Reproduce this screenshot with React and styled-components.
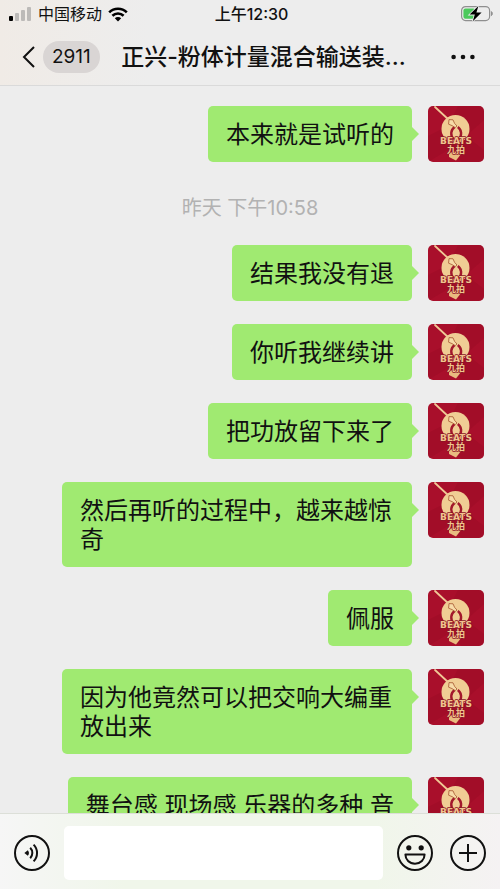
import styled, { createGlobalStyle } from "styled-components";
import { useState } from "react";

const chat = [
    { id: 1, text: "本来就是试听的" },
    { id: 2, time: "昨天 下午10:58" },
    { id: 3, text: "结果我没有退" },
    { id: 4, text: "你听我继续讲" },
    { id: 5, text: "把功放留下来了" },
    { id: 6, text: "然后再听的过程中，越来越惊奇" },
    { id: 7, text: "佩服" },
    { id: 8, text: "因为他竟然可以把交响大编重放出来" },
    { id: 9, text: "舞台感 现场感 乐器的多种 音" },
];

function SignalIcon() {
    return (
        <svg width="23" height="16" viewBox="0 0 23 16" aria-hidden="true">
            <rect x="0" y="10" width="4" height="5" rx="1" fill="#000" />
            <rect x="6" y="7" width="4" height="8" rx="1" fill="#bcbab8" />
            <rect x="12" y="4" width="4" height="11" rx="1" fill="#bcbab8" />
            <rect x="18" y="1" width="4" height="14" rx="1" fill="#bcbab8" />
        </svg>
    );
}

function WifiIcon() {
    return (
        <svg width="20" height="15" viewBox="0 0 20 15" fill="none" stroke="#000" strokeWidth="2.6" aria-hidden="true">
            <path d="M1.2 5.4a12.6 12.6 0 0 1 17.6 0" />
            <path d="M4.4 8.8a8 8 0 0 1 11.2 0" />
            <path d="M10 14.4 6.8 11.2a4.6 4.6 0 0 1 6.4 0z" fill="#000" stroke="none" />
        </svg>
    );
}

function BatteryIcon() {
    return (
        <svg width="34" height="18" viewBox="0 0 34 18" aria-hidden="true">
            <rect x="1.6" y="1.6" width="28" height="14" rx="4" fill="none" stroke="#8f8f8f" strokeWidth="1.2" />
            <path d="M31.4 6.6c1.2.6 1.2 3.4 0 4z" fill="#8f8f8f" stroke="#8f8f8f" />
            <rect x="3.4" y="3.4" width="12" height="10.4" rx="2" fill="#4cc95c" />
            <path d="M18.4 1 9.6 9.6h5.200L12.8 16.2l8.800-8.600h-5.200z" fill="#000" stroke="#ededed" strokeWidth="1.6" paintOrder="stroke" />
        </svg>
    );
}

function Portrait() {
    return (
        <svg width="56" height="56" viewBox="0 0 56 56" role="img" aria-label="BEATS 九拍">
            <rect width="56" height="56" fill="#a90f2b" />
            <path d="M0 30 20 20 30 0h26v14L38 30 56 44v12H34L20 44 0 56z" fill="#9b0b26" opacity="0.5" />
            <path d="M21 46.500 35 45.500 28 54.500 21 51z" fill="#e9bb80" />
            <circle cx="27.500" cy="23" r="14" fill="#f0cd94" />
            <path d="M25.800 33.500c-3.800-4-3.200-9.500.8-12.500M30.400 33.500c4-4 3.400-9.500-.6-12.500" fill="none" stroke="#a3182c" strokeWidth="2.400" />
            <path d="M7 1 21.500 14.500" stroke="#f0c795" strokeWidth="1.800" strokeLinecap="round" />
            <path d="m21 13.600 4 .2 1.600 3.600 2.400 2.600-1.800 1.600-3.200-2-3.400-1.400z" fill="#f7dba8" stroke="#a5542f" strokeWidth="0.800" strokeLinejoin="round" />
            <PortraitText x="28" y="38" fontSize="9">BEATS</PortraitText>
            <PortraitText x="28" y="47" fontSize="9">九拍</PortraitText>
        </svg>
    );
}

function VoiceIcon() {
    return (
        <svg width="36" height="36" viewBox="0 0 36 36" fill="none" stroke="#111" strokeWidth="2" aria-hidden="true">
            <circle cx="18" cy="18" r="17" />
            <path d="m10.400 18 3.400-2.800a4.400 4.400 0 0 1 0 5.600z" fill="#111" stroke="none" />
            <path d="M16.200 12.800a7.400 7.400 0 0 1 0 10.400M19.600 9.600a12 12 0 0 1 0 16.800" />
        </svg>
    );
}

function SmileIcon() {
    return (
        <svg width="36" height="36" viewBox="0 0 36 36" fill="none" stroke="#111" strokeWidth="2" aria-hidden="true">
            <circle cx="18" cy="18" r="17" />
            <circle cx="11.800" cy="12.800" r="2.600" fill="#111" stroke="none" />
            <circle cx="24.200" cy="12.800" r="2.600" fill="#111" stroke="none" />
            <path d="M8.400 19.600h19.200c0 5-4 9.200-9.600 9.200s-9.600-4.200-9.600-9.200z" strokeLinejoin="round" />
        </svg>
    );
}

function PlusIcon() {
    return (
        <svg width="36" height="36" viewBox="0 0 36 36" fill="none" stroke="#111" strokeWidth="2" aria-hidden="true">
            <circle cx="18" cy="18" r="17" />
            <path d="M18 9v18M9 18h18" />
        </svg>
    );
}

function App() {
    const [draft, setDraft] = useState("");

    const rows = chat.map(item => {
        if (item.time) {
            return <TimeStamp key={item.id}>{item.time}</TimeStamp>;
        }
        return (
            <Message key={item.id}>
                <Bubble>{item.text}</Bubble>
                <Avatar><Portrait /></Avatar>
            </Message>
        );
    });

    return (
        <Screen>
            <GlobalStyle />
            <Top>
                <StatusBar>
                    <Carrier>
                        <SignalIcon />
                        <span>中国移动</span>
                        <WifiIcon />
                    </Carrier>
                    <Clock>上午12:30</Clock>
                    <Battery><BatteryIcon /></Battery>
                </StatusBar>
                <NavBar>
                    <BackButton aria-label="返回">
                        <svg width="13" height="22" viewBox="0 0 13 22" fill="none" stroke="#111" strokeWidth="2" aria-hidden="true">
                            <path d="M12 1 2 11l10 10" />
                        </svg>
                        <Unread>2911</Unread>
                    </BackButton>
                    <Title>正兴-粉体计量混合输送装...</Title>
                    <MoreButton aria-label="更多">
                        <svg width="24" height="6" viewBox="0 0 24 6" fill="#111" aria-hidden="true">
                            <circle cx="2.600" cy="3" r="2.300" />
                            <circle cx="12" cy="3" r="2.300" />
                            <circle cx="21.400" cy="3" r="2.300" />
                        </svg>
                    </MoreButton>
                </NavBar>
            </Top>
            <Messages>{rows}</Messages>
            <Composer>
                <IconButton aria-label="语音"><VoiceIcon /></IconButton>
                <Field aria-label="消息" value={draft} onChange={e => setDraft(e.target.value)} />
                <Tools>
                    <IconButton aria-label="表情"><SmileIcon /></IconButton>
                    <IconButton aria-label="添加"><PlusIcon /></IconButton>
                </Tools>
            </Composer>
        </Screen>
    );
}

const GlobalStyle = createGlobalStyle`
    * {
        box-sizing: border-box;
    }

    body {
        margin: 0;
        background: #ededed;
        color: #111;
        font-family: Inter, "Noto Sans CJK SC", sans-serif;
    }

    button, input {
        font: inherit;
        color: inherit;
    }

    svg {
        display: block;
    }
`

const Screen = styled.div`
    height: 100vh;
    display: flex;
    flex-direction: column;
`

const Top = styled.header`
    flex: none;
    background: linear-gradient(90deg, #f0ebe6, #ededed 30%);
    border-bottom: 1px solid #dadada;
`

const StatusBar = styled.div`
    display: grid;
    grid-template-columns: 1fr auto 1fr;
    align-items: center;
    height: 28px;
    padding: 0 6px 0 9px;
    font-size: 16px;
    line-height: 28px;
`

const Carrier = styled.div`
    display: flex;
    align-items: center;
    gap: 6px;
`

const Clock = styled.time`
    font-weight: 500;
`

const Battery = styled.div`
    justify-self: end;
`

const NavBar = styled.div`
    display: flex;
    align-items: center;
    justify-content: space-between;
    height: 57px;
    padding: 0 25px 0 22px;
`

const IconButton = styled.button`
    flex: none;
    padding: 0;
    border: 0;
    background: none;
    cursor: pointer;
`

const BackButton = styled(IconButton)`
    display: flex;
    align-items: center;
    gap: 8px;
`

const MoreButton = styled(IconButton)`
    padding: 16px 0 16px 24px;
`

const Unread = styled.span`
    padding: 0 9px;
    border-radius: 16px;
    background: #d9d5d4;
    font-size: 19px;
    line-height: 32px;
`

const Title = styled.h1`
    margin: 0;
    font-size: 23px;
    font-weight: 500;
    line-height: 32px;
    white-space: nowrap;
`

const Messages = styled.main`
    flex: 1;
    min-height: 0;
    overflow: hidden;
    display: flex;
    flex-direction: column;
    gap: 23px;
    padding: 20px 16px 0;
`

const TimeStamp = styled.time`
    flex: none;
    align-self: center;
    padding-top: 9px;
    color: #b2b2b2;
    font-size: 20px;
    line-height: 28px;
`

const Message = styled.div`
    flex: none;
    display: flex;
    justify-content: flex-end;
    align-items: flex-start;
    gap: 16px;
`

const Bubble = styled.p`
    position: relative;
    max-width: 350px;
    margin: 0;
    padding: 14px 18px 13px;
    border-radius: 5px;
    background: #a0ea71;
    font-size: 24px;
    line-height: 29px;

    &::after {
        content: "";
        position: absolute;
        top: 21px;
        left: 100%;
        border: 7px solid transparent;
        border-left-color: #a0ea71;
        border-right-width: 0;
    }
`

const Avatar = styled.div`
    flex: none;
    border-radius: 5px;
    overflow: hidden;
`

const PortraitText = styled.text`
    fill: #f0c48e;
    stroke: #8c1526;
    stroke-width: 1.4px;
    stroke-linejoin: round;
    paint-order: stroke;
    text-anchor: middle;
    font-family: "DejaVu Sans", "Noto Sans CJK SC", sans-serif;
    font-weight: 700;
`

const Composer = styled.footer`
    flex: none;
    display: flex;
    align-items: center;
    gap: 14px;
    padding: 12px 14px 9px;
    border-top: 1px solid #dcdfd8;
    background: linear-gradient(90deg, #f6f6f6, #f0f6ea 25%, #f0f6ea 75%, #f5f2f3);
`

const Field = styled.input`
    flex: 1;
    min-width: 0;
    height: 54px;
    padding: 0 12px;
    border: 0;
    border-radius: 5px;
    background: #fff;
    font-size: 24px;
`

const Tools = styled.div`
    display: flex;
    gap: 17px;
`

export default App;
